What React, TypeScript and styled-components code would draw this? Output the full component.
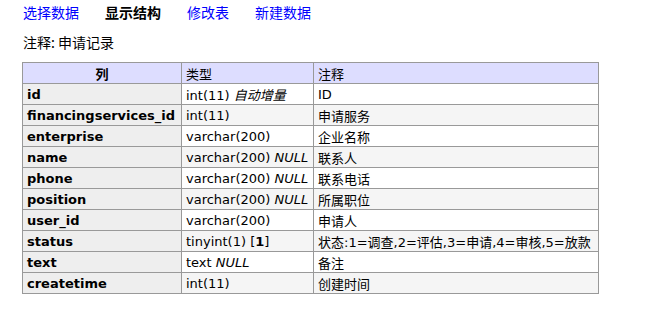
import styled, { createGlobalStyle } from "styled-components";

const GlobalStyle = createGlobalStyle`
  body {
    margin: 0;
    background: #fff;
    font-family: "DejaVu Sans", Verdana, "Noto Sans CJK SC", sans-serif;
    font-size: 13px;
    color: #000;
  }
`;

const Page = styled.div`
  padding: 3px 0 0 23px;
`;

const Menu = styled.p`
  margin: 0;
  display: flex;
  gap: 26px;
  line-height: 18px;
  font-size: 14px;
`;

const MenuLink = styled.a<{ $current?: boolean }>`
  color: ${(p) => (p.$current ? "#000" : "#00f")};
  font-weight: ${(p) => (p.$current ? "bold" : "normal")};
  text-decoration: none;
  font-family: "Noto Sans CJK SC", sans-serif;
`;

const Comment = styled.p`
  margin: 12px 0 0;
  line-height: 18px;
  font-size: 14px;
  font-family: "Noto Sans CJK SC", sans-serif;
`;

const Table = styled.table`
  margin: 11px 0 0 -1px;
  border-collapse: collapse;
  border: 1px solid #999;
  width: 577px;
  font-size: 13px;
`;

const HeadCell = styled.th<{ $center?: boolean }>`
  background: #ddf;
  border: 1px solid #999;
  padding: 0 4px;
  height: 20px;
  font-weight: ${(p) => (p.$center ? "bold" : "normal")};
  text-align: ${(p) => (p.$center ? "center" : "left")};
  font-family: "Noto Sans CJK SC", sans-serif;
`;

const NameCell = styled.th`
  background: #eee;
  border: 1px solid #999;
  padding: 0 4px;
  height: 20px;
  text-align: left;
  white-space: nowrap;
`;

const Cell = styled.td<{ $odd: boolean }>`
  background: ${(p) => (p.$odd ? "#f5f5f5" : "#fff")};
  border: 1px solid #999;
  padding: 0 4px;
  height: 20px;
  white-space: nowrap;
`;

const Note = styled.i`
  font-family: "Noto Sans CJK SC", sans-serif;
`;

const CjkText = styled.span`
  font-family: "DejaVu Sans", "Noto Sans CJK SC", sans-serif;
  font-size: 13px;
`;

type Row = { name: string; type: string; extra?: "auto" | "null" | "default"; comment: string };

const rows: Row[] = [
  { name: "id", type: "int(11)", extra: "auto", comment: "ID" },
  { name: "financingservices_id", type: "int(11)", comment: "申请服务" },
  { name: "enterprise", type: "varchar(200)", comment: "企业名称" },
  { name: "name", type: "varchar(200)", extra: "null", comment: "联系人" },
  { name: "phone", type: "varchar(200)", extra: "null", comment: "联系电话" },
  { name: "position", type: "varchar(200)", extra: "null", comment: "所属职位" },
  { name: "user_id", type: "varchar(200)", comment: "申请人" },
  { name: "status", type: "tinyint(1)", extra: "default", comment: "状态:1=调查,2=评估,3=申请,4=审核,5=放款" },
  { name: "text", type: "text", extra: "null", comment: "备注" },
  { name: "createtime", type: "int(11)", comment: "创建时间" },
];

function Extra({ kind }: { kind?: Row["extra"] }) {
  if (kind === "auto") return <> <Note>自动增量</Note></>;
  if (kind === "null") return <> <i>NULL</i></>;
  if (kind === "default") return <> [<b>1</b>]</>;
  return null;
}

export default function App() {
  return (
    <Page>
      <GlobalStyle />
      <Menu>
        <MenuLink href="#">选择数据</MenuLink>
        <MenuLink $current>显示结构</MenuLink>
        <MenuLink href="#">修改表</MenuLink>
        <MenuLink href="#">新建数据</MenuLink>
      </Menu>
      <Comment>注释: 申请记录</Comment>
      <Table>
        <thead>
          <tr>
            <HeadCell $center style={{ width: 150 }}>列</HeadCell>
            <HeadCell style={{ width: 123 }}>类型</HeadCell>
            <HeadCell>注释</HeadCell>
          </tr>
        </thead>
        <tbody>
          {rows.map((r, i) => (
            <tr key={r.name}>
              <NameCell>{r.name}</NameCell>
              <Cell $odd={i % 2 === 1}>
                {r.type}
                <Extra kind={r.extra} />
              </Cell>
              <Cell $odd={i % 2 === 1}>
                <CjkText>{r.comment}</CjkText>
              </Cell>
            </tr>
          ))}
        </tbody>
      </Table>
    </Page>
  );
}
